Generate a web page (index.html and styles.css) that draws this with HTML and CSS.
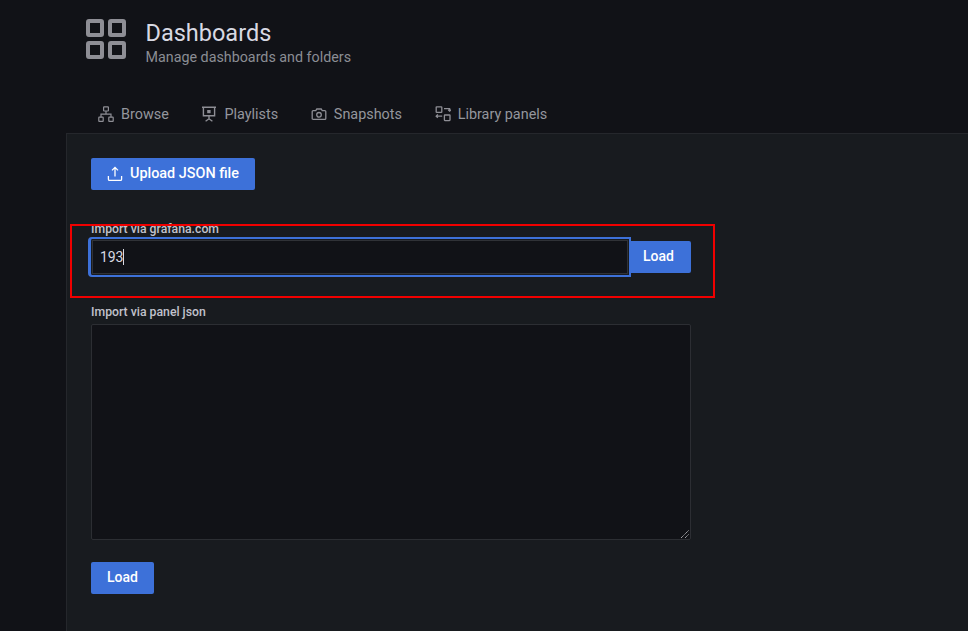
FILE: index.html
```html
<!DOCTYPE html>
<html lang="en">
<head>
<meta charset="utf-8">
<title>Dashboards</title>
<link rel="stylesheet" href="styles.css">
</head>
<body>
<div class="page">
  <header class="header">
    <div class="title-row">
      <svg class="title-icon" width="40" height="40" viewBox="0 0 40 40" fill="none" stroke="#8e8e95" stroke-width="4">
        <rect x="2" y="2" width="14" height="14" rx="1"/>
        <rect x="24" y="2" width="14" height="14" rx="1"/>
        <rect x="2" y="24" width="14" height="14" rx="1"/>
        <rect x="24" y="24" width="14" height="14" rx="1"/>
      </svg>
      <div class="title-text">
        <h1 class="title">Dashboards</h1>
        <div class="subtitle">Manage dashboards and folders</div>
      </div>
    </div>
    <nav class="tabs">
      <a class="tab">
        <svg width="16" height="16" viewBox="0 0 16 16" fill="none" stroke="#8e8e95" stroke-width="1.2">
          <rect x="5.6" y="0.8" width="4.8" height="4.2" rx=".5"/>
          <rect x="0.8" y="11.2" width="4.4" height="4.2" rx=".5"/>
          <rect x="10.8" y="11.2" width="4.4" height="4.2" rx=".5"/>
          <path d="M8 5v3.2M3 11.2V8.2h10v3"/>
        </svg>
        <span>Browse</span>
      </a>
      <a class="tab">
        <svg width="16" height="16" viewBox="0 0 16 16" fill="none" stroke="#8e8e95" stroke-width="1.4">
          <path d="M1 1.2h14M2.4 1.2v8.6h11.2V1.2M8 9.8v3M4.6 15.2l3.4-2.4 3.4 2.4"/>
          <rect x="6.2" y="4" width="3.4" height="3.2" fill="#8e8e95" stroke="none"/>
        </svg>
        <span>Playlists</span>
      </a>
      <a class="tab">
        <svg width="16" height="16" viewBox="0 0 16 16" fill="none" stroke="#8e8e95" stroke-width="1.3">
          <path d="M2.2 4.6h2.6l1-1.6h4.4l1 1.6h2.6c.6 0 1 .4 1 1v6.8c0 .6-.4 1-1 1H2.2c-.6 0-1-.4-1-1V5.6c0-.6.4-1 1-1z"/>
          <circle cx="8" cy="8.8" r="2.3"/>
        </svg>
        <span>Snapshots</span>
      </a>
      <a class="tab">
        <svg width="16" height="16" viewBox="0 0 16 16" fill="none" stroke="#8e8e95" stroke-width="1.3">
          <rect x="1.2" y="0.8" width="5.6" height="5.6" rx=".5"/>
          <rect x="9.4" y="9" width="5.6" height="5.6" rx=".5"/>
          <path d="M9 2.6h5.6v2.4M13.2 3.8l1.4 1.4 1.4-1.4" />
          <path d="M7.2 10.2H1.2M2.8 8.4l-1.6 1.8 1.6 1.6M1.2 10.2v.2"/>
        </svg>
        <span>Library panels</span>
      </a>
    </nav>
  </header>
  <main class="panel">
    <button class="btn btn-upload" type="button">
      <svg width="16" height="16" viewBox="0 0 16 16" fill="none" stroke="#fff" stroke-width="1.3">
        <path d="M1.4 10v3.2c0 .8.5 1.2 1.2 1.2h10.8c.7 0 1.2-.4 1.2-1.2V10M8 10.6V1.6M5 4.4l3-3 3 3"/>
      </svg>
      <span>Upload JSON file</span>
    </button>
    <label class="label label-grafana">Import via grafana.com</label>
    <div class="input-row">
      <div class="input-focus"><span class="input-value">193</span><span class="caret"></span></div>
      <button class="btn btn-load-inline" type="button">Load</button>
    </div>
    <label class="label label-json">Import via panel json</label>
    <div class="textarea">
      <svg class="grip" width="8" height="8" viewBox="0 0 8 8" stroke="#b8b8bc" stroke-width="1" fill="none" stroke-dasharray="1.2 .6">
        <path d="M0 8L8 0M4 8l4-4"/>
      </svg>
    </div>
    <button class="btn btn-load" type="button">Load</button>
    <div class="annotation"></div>
  </main>
</div>
</body>
</html>
```
FILE: styles.css
```css
* { box-sizing: border-box; }
html, body { margin: 0; height: 100%; }
body {
  background: #111217;
  font-family: Roboto, "Liberation Sans", sans-serif;
  color: #ccccdc;
  overflow: hidden;
}
.page { width: 968px; height: 631px; display: flex; flex-direction: column; }
.header { height: 133px; padding-left: 86px; flex: none; }
.title-row { display: flex; padding-top: 18px; height: 95px; }
.title-icon { flex: none; margin-right: 20px; margin-top: 1px; }
.title-text { margin-left: -0.5px; padding-top: 1px; }
.title {
  margin: 0;
  font-size: 23.5px;
  line-height: 28px;
  font-weight: 400;
  color: #d8d9e3;
}
.subtitle { font-size: 14.3px; line-height: 21px; color: #8b8d94; }
.tabs { display: flex; padding-left: 12px; gap: 32.7px; height: 38px; }
.tab {
  display: flex;
  align-items: center;
  gap: 7px;
  height: 38px;
  font-size: 14.4px;
  font-weight: 400;
  color: #94969d;
}
.panel {
  position: relative;
  flex: 1;
  margin-left: 66px;
  background: #181b1f;
  border-top: 1px solid #25272c;
  border-left: 1px solid #25272c;
  padding: 24px 0 0 24px;
}
.btn {
  display: flex;
  align-items: center;
  border: 0;
  background: #3d71d9;
  color: #fff;
  font-family: inherit;
  font-size: 14px;
  font-weight: 500;
  padding: 0 0 2px;
  border-radius: 2px;
}
.btn-upload { width: 164px; height: 32px; padding-left: 16px; gap: 7px; font-size: 14.4px; }
.btn-upload svg { margin-top: 2px; }
.label {
  display: block;
  font-size: 12.25px;
  line-height: 14px;
  font-weight: 500;
  color: #c1c2cc;
}
.label-grafana { margin-top: 32px; }
.input-row { display: flex; align-items: center; width: 603px; margin-left: -3px; height: 40px; margin-top: 1px; }
.input-focus {
  display: flex;
  align-items: center;
  width: 543px;
  height: 40px;
  padding-left: 8px;
  background: #111217;
  border: 2px solid #3d71d9;
  border-left-width: 3px;
  border-radius: 4px 0 0 4px;
  box-shadow: inset 0 0 0 1px #181b1f, inset 0 0 0 2px #303237;
  font-size: 14px;
  color: #d8d9e3;
}
.input-value { line-height: 16px; margin-left: 1px; letter-spacing: -0.1px; }
.caret { width: 1px; height: 16px; background: #d8d9e3; }
.btn-load-inline {
  width: 60px;
  height: 32px;
  justify-content: flex-start;
  padding-left: 12px;
  border-radius: 0 2px 2px 0;
}
.label-json { margin-top: 28px; }
.textarea {
  position: relative;
  width: 600px;
  height: 216px;
  margin-top: 5px;
  background: #111217;
  border: 1px solid #2c2e33;
  border-radius: 2px;
}
.grip { position: absolute; right: 1px; bottom: 1px; }
.btn-load { width: 63px; height: 32px; justify-content: center; margin-top: 22px; }
.annotation {
  position: absolute;
  left: 3px;
  top: 90px;
  width: 645px;
  height: 74px;
  border: 2px solid #f00000;
  pointer-events: none;
}
```
